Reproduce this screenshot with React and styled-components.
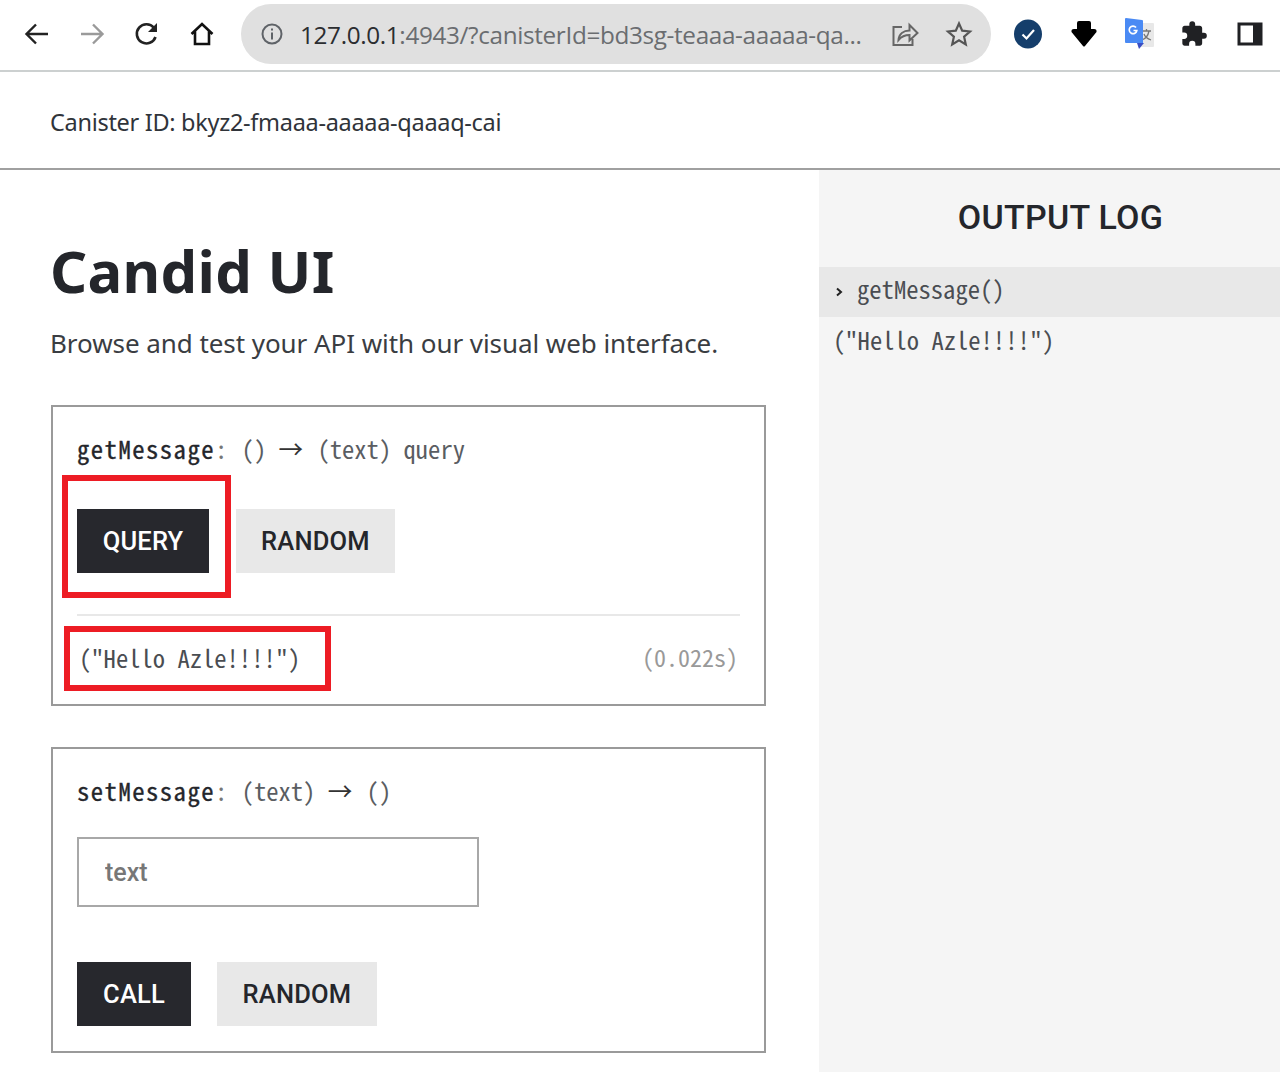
import React from "react";
import styled, { createGlobalStyle } from "styled-components";

const GlobalStyle = createGlobalStyle`
  * { box-sizing: border-box; }
  html, body { margin: 0; padding: 0; background: #fff; }
  body { font-family: "Noto Sans", sans-serif; color: #24262b; }
`;

const mono = `"Noto Sans Mono CJK KR", "Liberation Mono", monospace`;

function App() {
  return (
    <Page>
      <GlobalStyle />
      <Toolbar>
        <NavSlot>
          <svg width="28" height="28" viewBox="0 0 28 28" fill="none" stroke="#222" strokeWidth="2.4">
            <path d="M25 14H4M13 4.500 3.500 14l9.500 9.500" />
          </svg>
        </NavSlot>
        <NavSlot>
          <svg width="28" height="28" viewBox="0 0 28 28" fill="none" stroke="#9a9a9a" strokeWidth="2.4">
            <path d="M3 14h21M15 4.500l9.500 9.500-9.500 9.500" />
          </svg>
        </NavSlot>
        <NavSlot>
          <svg width="28" height="28" viewBox="0 0 28 28" fill="none">
            <path d="M22.500 17a9.600 9.600 0 1 1-1.600-9.200" stroke="#222" strokeWidth="2.6" />
            <path d="M24 3v9h-9z" fill="#222" />
          </svg>
        </NavSlot>
        <NavSlot>
          <svg width="28" height="28" viewBox="0 0 28 28" fill="none" stroke="#111" strokeWidth="2.6">
            <path d="M3.500 14 14 4l10.500 10M7 11.500V24h14V11.500" />
          </svg>
        </NavSlot>
        <Omnibox>
          <svg width="24" height="24" viewBox="0 0 24 24" fill="none" stroke="#5f6368" strokeWidth="2">
            <circle cx="12" cy="12" r="9.500" />
            <path d="M12 10.500V17.500M12 6.500v2" />
          </svg>
          <UrlText>
            <UrlHost>127.0.0.1</UrlHost>:4943/?canisterId=bd3sg-teaaa-aaaaa-qa...
          </UrlText>
          <svg width="30" height="28" viewBox="0 0 30 28" fill="none" stroke="#666" strokeWidth="2">
            <path d="M12 7H3.500v18h19v-6" />
            <path d="M8.500 20c.5-6 5-9.500 11-9.500V5l8 8-8 7.500V15c-4.500 0-8 1.500-11 5z" />
          </svg>
          <StarIcon width="28" height="28" viewBox="0 0 28 28" fill="none" stroke="#555" strokeWidth="2.2">
            <path d="m14 3.500 3.200 7.200 7.800.8-5.900 5.200 1.700 7.700-6.800-4-6.800 4 1.700-7.700L3 11.500l7.800-.8z" />
          </StarIcon>
        </Omnibox>
        <Extensions>
          <ExtSlot>
            <svg width="30" height="32" viewBox="0 0 30 32">
              <ellipse cx="15" cy="16" rx="14" ry="14.500" fill="#153e6b" />
              <path d="M9.500 16.500l4 4 7.500-8.500" fill="none" stroke="#fff" strokeWidth="2.2" />
            </svg>
          </ExtSlot>
          <ExtSlot>
            <DownloadIcon width="26" height="28" viewBox="0 0 26 28">
              <path d="M6 3q0-2 2-2h10q2 0 2 2v6h3q3 0 2.500 3L14 26q-1 1-2 0L.5 12Q0 9 3 9h3z" fill="#000" />
            </DownloadIcon>
          </ExtSlot>
          <ExtSlot>
            <svg width="30" height="36" viewBox="0 0 30 36">
              <rect x="14" y="7" width="16" height="24" rx="1" fill="#e8e8e8" />
              <path d="M18 15h9M22.500 13v2M25 15c-1 5-4 8-7 9M20 18c1 3 4 5 7 6" stroke="#777" strokeWidth="1.3" fill="none" />
              <path d="M2 2q-1 0-1 1v23q0 1 1 1h12l5 0V5q0-1-1-1L2 2z" fill="#4a8af4" />
              <path d="M13 27h7l-5 6z" fill="#3b4fc4" />
              <path d="M12 11.500a3.800 3.800 0 1 0 .8 3H9.500" fill="none" stroke="#fff" strokeWidth="1.7" />
            </svg>
          </ExtSlot>
          <ExtSlot>
            <svg width="28" height="28" viewBox="0 0 24 24" fill="#202124">
              <path d="M20.500 11H19V7c0-1.100-.9-2-2-2h-4V3.500a2.500 2.500 0 0 0-5 0V5H4c-1.100 0-2 .9-2 2v3.800h1.500a2.700 2.700 0 0 1 0 5.400H2V20c0 1.100.9 2 2 2h3.800v-1.500a2.700 2.700 0 0 1 5.400 0V22H17c1.100 0 2-.9 2-2v-4h1.500a2.500 2.500 0 0 0 0-5z" />
            </svg>
          </ExtSlot>
          <ExtSlot>
            <svg width="26" height="26" viewBox="0 0 26 26" fill="none">
              <rect x="2" y="3" width="22" height="20" stroke="#202124" strokeWidth="3" />
              <rect x="16" y="3" width="8" height="20" fill="#202124" />
            </svg>
          </ExtSlot>
        </Extensions>
      </Toolbar>

      <CanisterBar>Canister ID: bkyz2-fmaaa-aaaaa-qaaaq-cai</CanisterBar>

      <Body>
        <Main>
          <Title>Candid UI</Title>
          <Subtitle>Browse and test your API with our visual web interface.</Subtitle>

          <MethodCard>
            <Signature>
              <MethodName>getMessage</MethodName>
              <Colon>:</Colon> () <Arrow>→</Arrow> (text) query
            </Signature>
            <ButtonRow>
              <Highlighted $inset="-34px -22px -25px -15px">
                <Button $primary $width={132}>QUERY</Button>
              </Highlighted>
              <Button $width={159}>RANDOM</Button>
            </ButtonRow>
            <ResultRow>
              <Highlighted $inset="-15px -31px -18px -15px">
                <ResultText>("Hello Azle!!!!")</ResultText>
              </Highlighted>
              <Timing>(0.022s)</Timing>
            </ResultRow>
          </MethodCard>

          <MethodCard $last>
            <Signature>
              <MethodName>setMessage</MethodName>
              <Colon>:</Colon> (text) <Arrow>→</Arrow> ()
            </Signature>
            <TextInput placeholder="text" />
            <ButtonRow $spaced>
              <Button $primary $width={114}>CALL</Button>
              <Button $width={160}>RANDOM</Button>
            </ButtonRow>
          </MethodCard>
        </Main>

        <OutputLog>
          <LogTitle>OUTPUT LOG</LogTitle>
          <LogCall>
            <svg width="8" height="10" viewBox="0 0 8 10" fill="none" stroke="#222" strokeWidth="2">
              <path d="M2 1.500 6 5 2 8.500" />
            </svg>
            <LogCallText>getMessage()</LogCallText>
          </LogCall>
          <LogResult>("Hello Azle!!!!")</LogResult>
        </OutputLog>
      </Body>
    </Page>
  );
}

const Page = styled.div`
  width: 1280px;
  height: 1072px;
  overflow: hidden;
  display: flex;
  flex-direction: column;
`;

const Toolbar = styled.header`
  height: 72px;
  flex: none;
  display: flex;
  align-items: center;
  padding: 0 2px 2px 9px;
  border-bottom: 2px solid #ccd0d0;
`;

const NavSlot = styled.div`
  width: 55px;
  flex: none;
  display: flex;
  justify-content: center;
  align-items: center;
`;

const Omnibox = styled.div`
  width: 750px;
  height: 60px;
  margin-left: 12px;
  flex: none;
  display: flex;
  align-items: center;
  padding: 0 18px 0 19px;
  background: #e0e0e0;
  border-radius: 30px;
`;

const UrlText = styled.span`
  flex: 1;
  margin-left: 16px;
  font-family: "Open Sans", "Noto Sans", sans-serif;
  font-size: 24.3px;
  letter-spacing: -0.35px;
  color: #6a6d70;
  white-space: nowrap;
`;

const UrlHost = styled.span`
  color: #2b2d30;
`;

const StarIcon = styled.svg`
  margin-left: 25px;
`;

const DownloadIcon = styled.svg`
  margin-left: 2px;
`;

const Extensions = styled.div`
  display: flex;
  margin-left: 9px;
`;

const ExtSlot = styled.div`
  width: 55.5px;
  display: flex;
  justify-content: center;
  align-items: center;
`;

const CanisterBar = styled.div`
  height: 98px;
  flex: none;
  display: flex;
  align-items: center;
  padding: 4px 0 0 50px;
  border-bottom: 2px solid #a0a0a0;
  font-size: 23.5px;
  letter-spacing: -0.3px;
  color: #30343a;
`;

const Body = styled.div`
  flex: 1;
  display: flex;
  min-height: 0;
`;

const Main = styled.main`
  width: 819px;
  flex: none;
  padding: 61px 53px 0 51px;
`;

const Title = styled.h1`
  margin: 0 0 0 -1px;
  font-size: 58px;
  line-height: 80px;
  font-weight: 700;
  letter-spacing: 0.3px;
  color: #24262b;
`;

const Subtitle = styled.p`
  margin: 13px 0 43px -1px;
  font-size: 26px;
  letter-spacing: -0.06px;
  line-height: 38px;
  color: #3a3d42;
  white-space: nowrap;
`;

const MethodCard = styled.section`
  border: 2px solid #9a9a9a;
  padding: 0 24px;
  margin-bottom: ${(props) => (props.$last ? 0 : "41px")};
  height: ${(props) => (props.$last ? "306px" : "301px")};
`;

const Signature = styled.div`
  margin-top: 26px;
  font-family: ${mono};
  font-size: 24.6px;
  line-height: 30px;
  color: #5a5d62;
  white-space: pre;
`;

const MethodName = styled.span`
  color: #24262b;
  -webkit-text-stroke: 0.35px #24262b;
  letter-spacing: 1.5px;
`;

const Colon = styled.span`
  color: #777;
  margin-right: 2px;
`;

const Arrow = styled.span`
  margin-right: 2px;
  color: #333;
`;

const ButtonRow = styled.div`
  display: flex;
  gap: ${(props) => (props.$spaced ? "26px" : "27px")};
  margin-top: ${(props) => (props.$spaced ? "55px" : "46px")};
`;

const Button = styled.button`
  width: ${(props) => props.$width}px;
  height: 64px;
  padding: 0;
  border: none;
  background: ${(props) => (props.$primary ? "#27282d" : "#e8e8e8")};
  color: ${(props) => (props.$primary ? "#fff" : "#24262b")};
  font-family: Roboto, sans-serif;
  font-size: 25.5px;
  letter-spacing: 0.2px;
  font-weight: 500;
`;

const Highlighted = styled.div`
  position: relative;
  &::after {
    content: "";
    position: absolute;
    inset: ${(props) => props.$inset};
    border: 6px solid #ed1c24;
    pointer-events: none;
  }
`;

const ResultRow = styled.div`
  display: flex;
  justify-content: space-between;
  align-items: center;
  margin-top: 41px;
  padding: 25px 2px 0;
  border-top: 2px solid #e8e8e8;
`;

const ResultText = styled.div`
  font-family: ${mono};
  font-size: 24.6px;
  line-height: 32px;
  color: #4a4d52;
  white-space: pre;
`;

const Timing = styled.div`
  font-family: ${mono};
  font-size: 24px;
  line-height: 32px;
  color: #999;
`;

const TextInput = styled.input`
  display: block;
  width: 402px;
  height: 70px;
  margin-top: 32px;
  padding: 0 26px;
  border: 2px solid #a8a8a8;
  background: #fff;
  outline: none;
  font-family: Roboto, sans-serif;
  font-size: 25px;
  font-weight: 500;
  &::placeholder {
    color: #777;
    opacity: 1;
  }
`;

const OutputLog = styled.aside`
  flex: 1;
  background: #f5f5f5;
`;

const LogTitle = styled.h2`
  margin: 0;
  height: 97px;
  padding: 26px 0 0 22px;
  text-align: center;
  font-family: Roboto, sans-serif;
  font-size: 34px;
  letter-spacing: 0.3px;
  line-height: 42px;
  font-weight: 500;
  color: #24262b;
`;

const LogCall = styled.div`
  height: 50px;
  display: flex;
  align-items: center;
  gap: 14px;
  padding-left: 16px;
  background: #e8e8e8;
`;

const LogCallText = styled.span`
  padding-bottom: 8px;
  font-family: ${mono};
  font-size: 24.6px;
  color: #4a4d52;
`;

const LogResult = styled.div`
  padding: 6px 0 0 14px;
  font-family: ${mono};
  font-size: 24.6px;
  line-height: 32px;
  color: #4a4d52;
  white-space: pre;
`;

export default App;
